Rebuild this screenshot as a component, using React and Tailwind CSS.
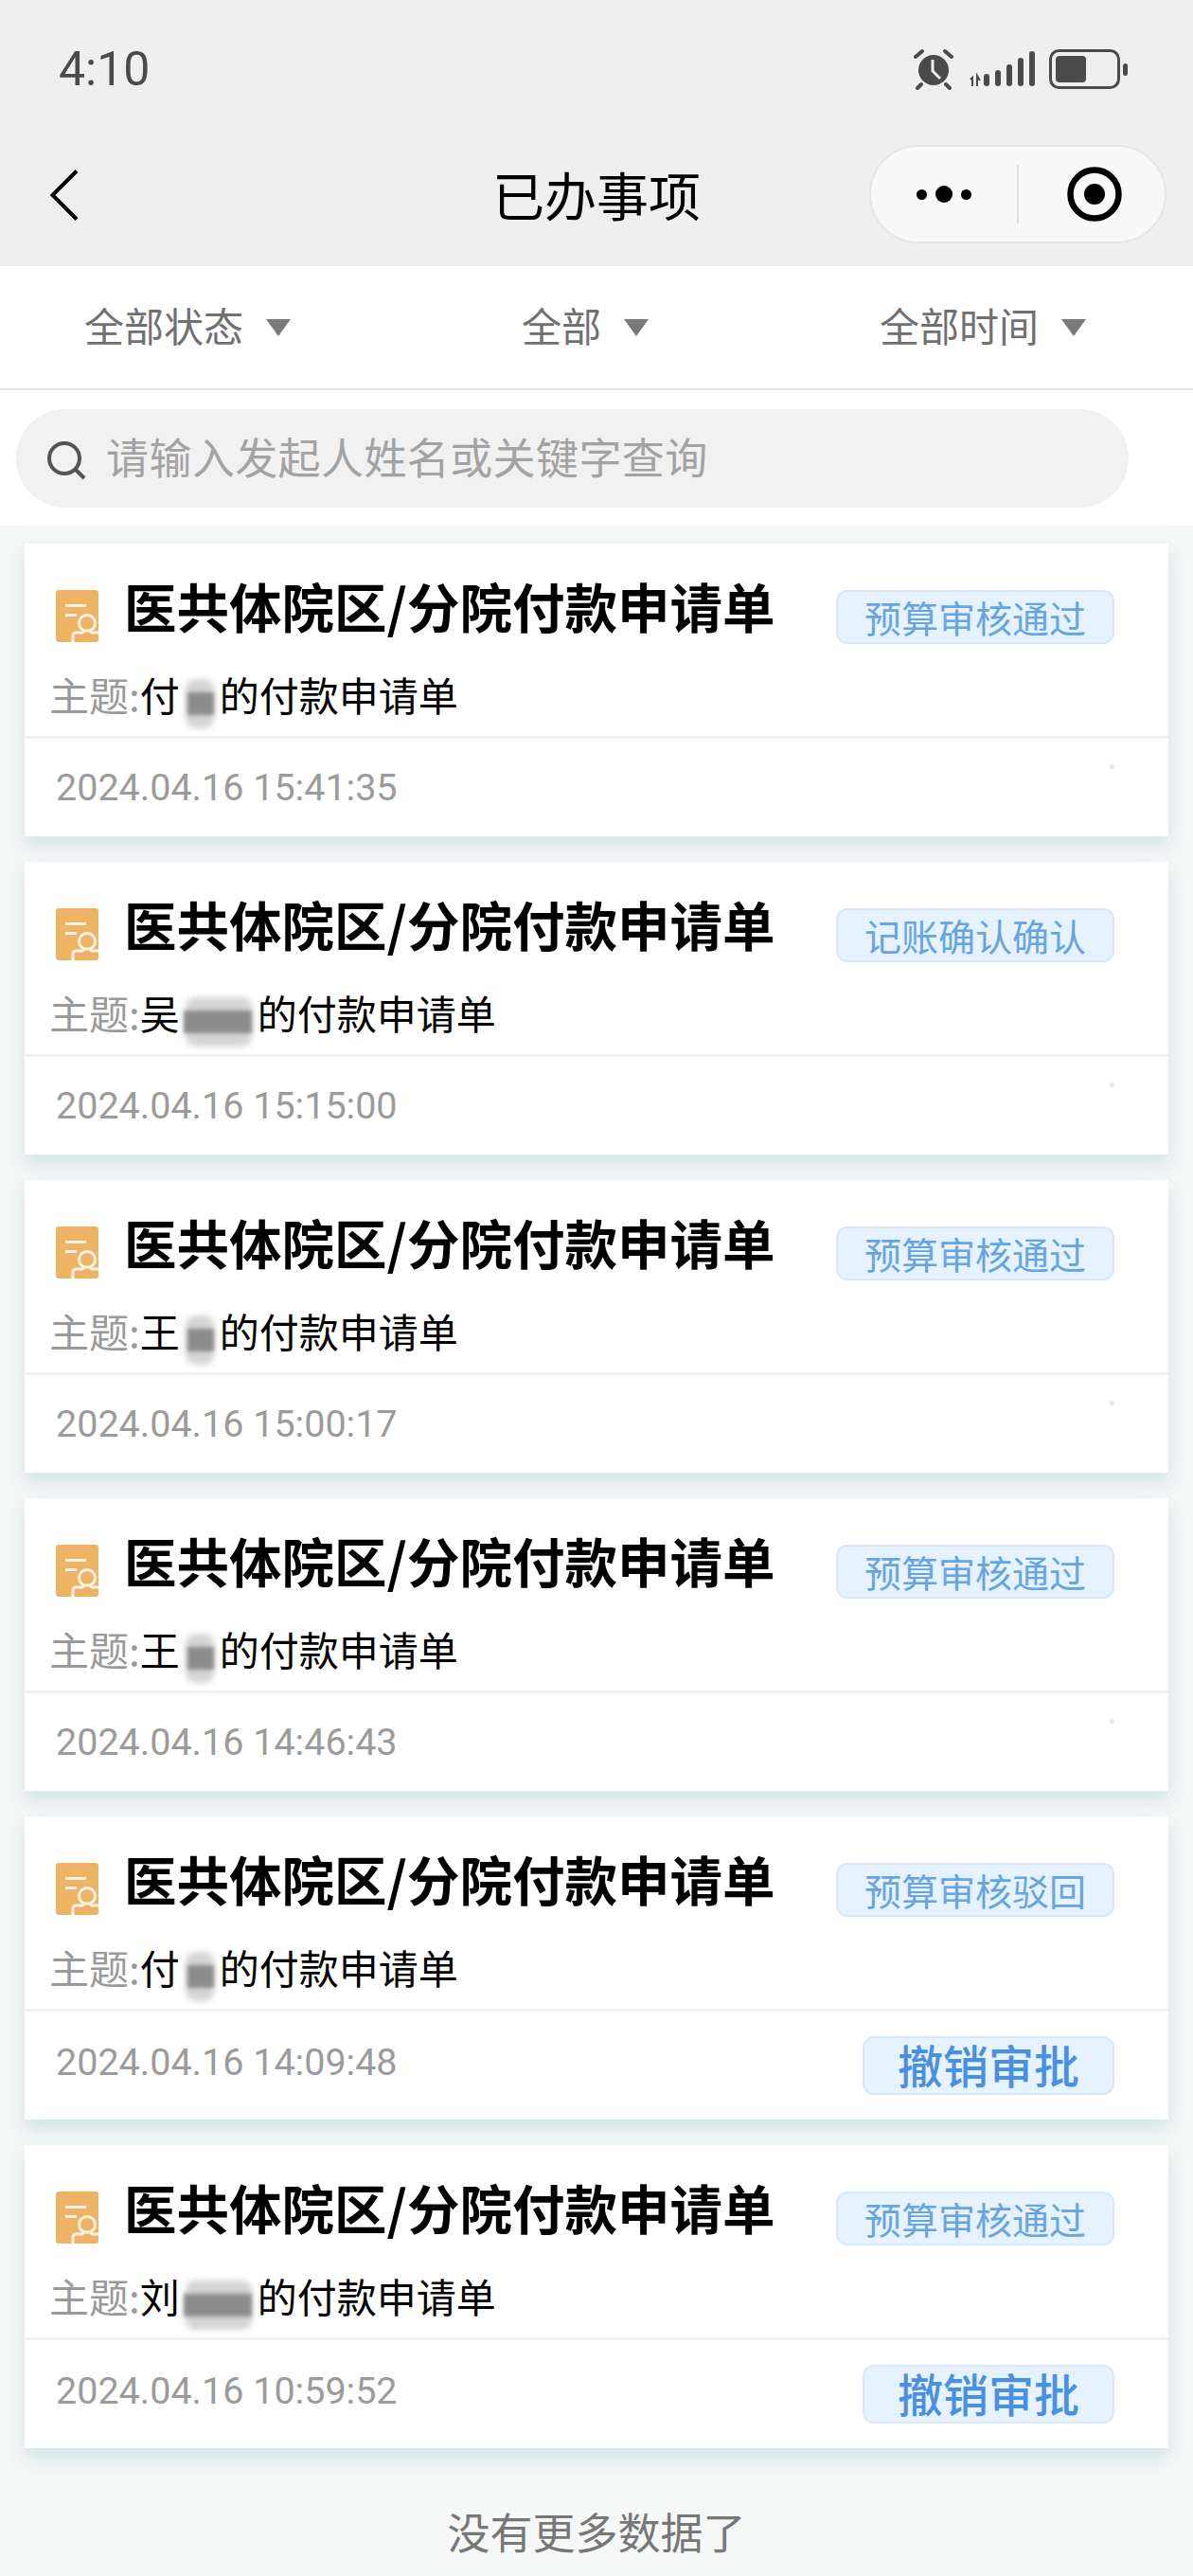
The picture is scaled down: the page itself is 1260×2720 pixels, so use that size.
import React from 'react'

const cjk = "font-['Noto_Sans_CJK_SC','Noto_Sans',sans-serif]"

const items = [
  { head: '付', masks: 1, status: '预算审核通过', time: '2024.04.16 15:41:35' },
  { head: '吴', masks: 2, status: '记账确认确认', time: '2024.04.16 15:15:00' },
  { head: '王', masks: 1, status: '预算审核通过', time: '2024.04.16 15:00:17' },
  { head: '王', masks: 1, status: '预算审核通过', time: '2024.04.16 14:46:43' },
  { head: '付', masks: 1, status: '预算审核驳回', time: '2024.04.16 14:09:48', revoke: true },
  { head: '刘', masks: 2, status: '预算审核通过', time: '2024.04.16 10:59:52', revoke: true },
]

function DocIcon() {
  return (
    <svg width="45" height="55" viewBox="0 0 45 55" className="shrink-0 mt-[7px]">
      <rect width="45" height="55" rx="3" fill="#eeb465" />
      <rect x="10" y="15" width="22" height="3" fill="#fdf3e3" />
      <rect x="10" y="25" width="12" height="3" fill="#fdf3e3" />
      <circle cx="33" cy="35" r="8.500" fill="#eeb465" stroke="#fdf3e3" strokeWidth="3" />
      <path d="M18 55v-7a3 3 0 0 1 3-3h7l2-2h6l2 2h7" fill="#eeb465" stroke="#fdf3e3" strokeWidth="3" />
    </svg>
  )
}

// blurred-out name in the subject line
function Mask({ wide }) {
  return (
    <span className={`relative inline-block align-[-12px] h-[52px] -my-[6px] ${wide ? 'w-[82px]' : 'w-[42px]'}`}>
      <span className="absolute inset-x-[6px] inset-y-0 rounded-[10px] bg-[#d4d4d4] blur-[3px]" />
      <span className={`absolute top-[14px] h-[24px] bg-[#8c8c8c] blur-[2px] ${wide ? 'left-[4px] w-[72px]' : 'left-[8px] w-[28px]'}`} />
    </span>
  )
}

function Card({ item }) {
  return (
    <div className="mx-[26px] bg-white shadow-[0_10px_18px_rgba(185,215,215,0.6)]">
      <div className="h-[203px] border-b-[3px] border-[#f0f3f3] box-content">
        <div className="flex items-start pt-[42px] pl-[33px] pr-[57px]">
          <DocIcon />
          <div className="ml-[27px] -mt-[5px] mb-[5px] text-[55.500px] leading-[56px] font-bold text-black whitespace-nowrap">医共体院区/分院付款申请单</div>
          <div className="ml-auto mt-[7px] w-[294px] h-[57px] flex items-center justify-center rounded-[12px] bg-[#e6f2fd] border-[2px] border-[#d6e8f9] text-[39px] leading-none text-[#66a5e2]">{item.status}</div>
        </div>
        <div className="mt-[23px] pl-[26px] text-[42px] leading-[60px] text-black whitespace-nowrap">
          <span className="text-[#9a9a9a]">主题:</span>
          {item.head}
          <Mask wide={item.masks === 2} />
          的付款申请单
        </div>
      </div>
      <div className={`flex items-center pl-[33px] pr-[57px] ${item.revoke ? 'h-[114px]' : 'h-[103px]'}`}>
        <span className={`font-['Roboto',sans-serif] text-[39.500px] leading-none text-[#9b9b9b] ${item.revoke ? '-mt-[6px]' : ''}`}>{item.time}</span>
        {item.revoke ? (
          <div className="ml-auto w-[266px] h-[62px] flex items-center justify-center rounded-[12px] bg-[#e6f2fd] border-[2px] border-[#d6e8f9] text-[48px] leading-none font-medium text-[#4a90e2] pb-[4px]">撤销审批</div>
        ) : (
          <span className="ml-auto self-start mt-[27px] w-[5px] h-[5px] rounded-full bg-[#e3e7f4]" />
        )}
      </div>
    </div>
  )
}

function Filter({ label }) {
  return (
    <div className="flex items-center justify-center pr-[24px]">
      <span className="text-[42px] leading-none text-[#707070] -mt-[5px]">{label}</span>
      <svg width="26" height="18" viewBox="0 0 26 18" className="ml-[24px]">
        <path d="M0 0h26L13 18z" fill="#7a7a7a" />
      </svg>
    </div>
  )
}

export default function App() {
  return (
    <div className={`${cjk} w-[1260px] h-[2720px] overflow-hidden bg-[#f6f7f7]`}>
      {/* status + nav */}
      <div className="h-[281px] bg-[#efefef]">
        <div className="flex items-center h-[146px] pl-[62px] pr-[68px]">
          <span className="font-['Roboto',sans-serif] text-[50px] leading-none text-[#4a4a4a]">4:10</span>
          <div className="ml-auto flex items-center">
            <svg width="44" height="44" viewBox="0 0 44 44">
              <circle cx="22" cy="23" r="16" fill="#4a4a4a" />
              <path d="M21 12v12l8 8" fill="none" stroke="#efefef" strokeWidth="3" />
              <path d="M3 9l7-6M41 9l-7-6M9 38l-4 4M35 38l4 4" stroke="#4a4a4a" strokeWidth="4" strokeLinecap="round" />
            </svg>
            <svg width="72" height="40" viewBox="0 0 72 40" className="ml-[16px]">
              <path d="M3 38v-9l-2 2M8 38v-11l3 5" fill="none" stroke="#4a4a4a" strokeWidth="2" />
              <rect x="15" y="25" width="6" height="13" rx="3" fill="#4a4a4a" />
              <rect x="27" y="21" width="6" height="17" rx="3" fill="#4a4a4a" />
              <rect x="39" y="15" width="6" height="23" rx="3" fill="#4a4a4a" />
              <rect x="51" y="8" width="6" height="30" rx="3" fill="#4a4a4a" />
              <rect x="63" y="1" width="6" height="37" rx="3" fill="#4a4a4a" />
            </svg>
            <svg width="84" height="42" viewBox="0 0 84 42" className="ml-[12px]">
              <rect x="1.500" y="1.500" width="72" height="39" rx="9" fill="none" stroke="#4a4a4a" strokeWidth="3" />
              <rect x="7" y="7" width="32" height="28" rx="4" fill="#4a4a4a" />
              <rect x="78" y="15" width="5" height="13" rx="2.500" fill="#4a4a4a" />
            </svg>
          </div>
        </div>
        <div className="relative flex items-center justify-center h-[121px]">
          <svg width="30" height="54" viewBox="0 0 30 54" className="absolute left-[53px] top-[33px]">
            <path d="M28 1.500L2.500 27L28 52.500" fill="none" stroke="#000" strokeWidth="4" />
          </svg>
          <span className="text-[55px] leading-none text-black -mt-[5px]">已办事项</span>
          <div className="absolute left-[918px] top-[7px] w-[314px] h-[104px] flex items-center rounded-full bg-[#f8f8f8] border-[2px] border-[#e6e6e6]">
            <div className="w-[154px] flex items-center justify-center gap-[9px]">
              <span className="w-[11px] h-[11px] rounded-full bg-black" />
              <span className="w-[18px] h-[18px] rounded-full bg-black" />
              <span className="w-[11px] h-[11px] rounded-full bg-black" />
            </div>
            <span className="w-[2px] h-[62px] bg-[#dedede]" />
            <div className="flex-1 flex items-center justify-center pl-[6px]">
              <svg width="60" height="60" viewBox="0 0 60 60">
                <circle cx="30" cy="30" r="25.500" fill="none" stroke="#000" strokeWidth="6.500" />
                <circle cx="30" cy="30" r="11" fill="#000" />
              </svg>
            </div>
          </div>
        </div>
      </div>

      {/* filters */}
      <div className="h-[131px] grid grid-cols-3 items-center bg-white border-b-[2px] border-[#e6e6e6]">
        <Filter label="全部状态" />
        <Filter label="全部" />
        <Filter label="全部时间" />
      </div>

      {/* search */}
      <div className="bg-white pt-[20px] pb-[19px] pl-[17px]">
        <div className="w-[1175px] h-[104px] flex items-center rounded-full bg-[#f1f1f2] pl-[32px]">
          <svg width="42" height="42" viewBox="0 0 42 42" className="mt-[4px]">
            <circle cx="19" cy="19" r="16" fill="none" stroke="#555" strokeWidth="4" />
            <path d="M30 30l10 10" stroke="#555" strokeWidth="4" />
          </svg>
          <span className="ml-[21px] -mt-[6px] text-[45px] leading-none tracking-[0.4px] text-[#a3a3a3]">请输入发起人姓名或关键字查询</span>
        </div>
      </div>

      {/* list */}
      <div className="pt-[19px] flex flex-col gap-[27px]">
        {items.map(item => <Card key={item.time} item={item} />)}
      </div>

      <div className="mt-[65px] text-center text-[45px] leading-none text-[#777]">没有更多数据了</div>
    </div>
  )
}
